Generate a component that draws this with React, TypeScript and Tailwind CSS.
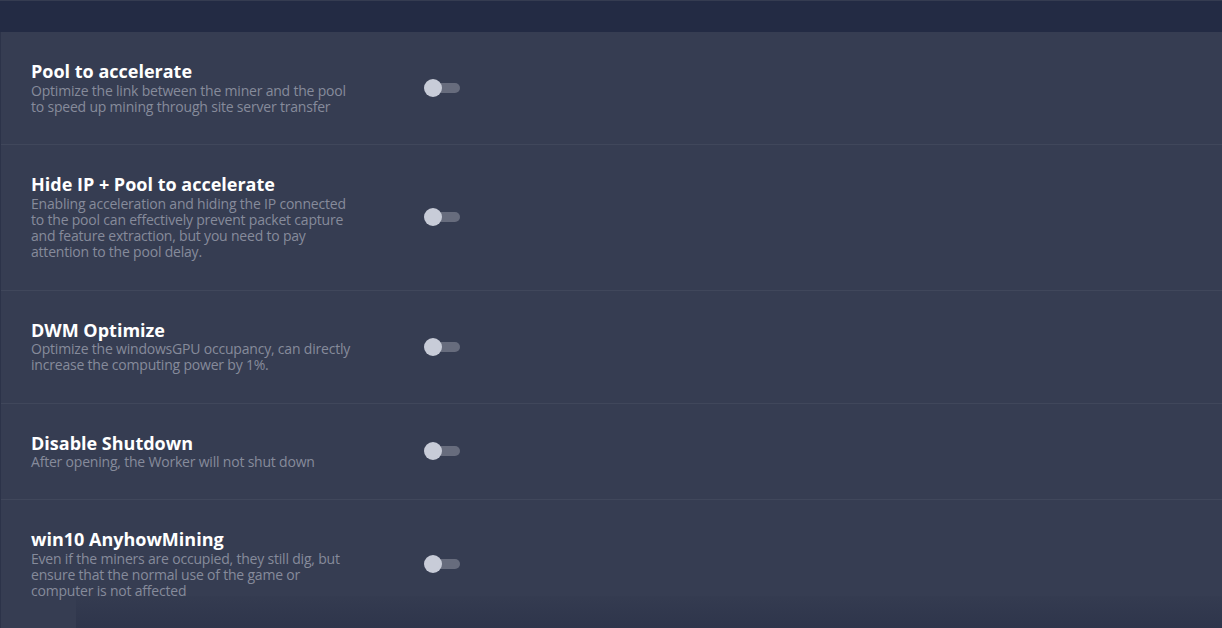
import { useState } from 'react';

const options = [
  {
    id: 'pool',
    title: 'Pool to accelerate',
    lines: ['Optimize the link between the miner and the pool', 'to speed up mining through site server transfer'],
  },
  {
    id: 'hideip',
    title: 'Hide IP + Pool to accelerate',
    lines: [
      'Enabling acceleration and hiding the IP connected',
      'to the pool can effectively prevent packet capture',
      'and feature extraction, but you need to pay',
      'attention to the pool delay.',
    ],
  },
  {
    id: 'dwm',
    title: 'DWM Optimize',
    lines: ['Optimize the windowsGPU occupancy, can directly', 'increase the computing power by 1%.'],
  },
  {
    id: 'shutdown',
    title: 'Disable Shutdown',
    lines: ['After opening, the Worker will not shut down'],
  },
  {
    id: 'anyhow',
    title: 'win10 AnyhowMining',
    lines: [
      'Even if the miners are occupied, they still dig, but',
      'ensure that the normal use of the game or',
      'computer is not affected',
    ],
  },
];

const Toggle = ({ on, onClick }: { on: boolean; onClick: () => void }) => (
  <button onClick={onClick} className="relative w-[36px] h-[18px] flex items-center">
    <span className="absolute left-[8px] right-0 h-[10px] rounded-full bg-[#676c7d]" />
    <span
      className={`absolute top-0 w-[18px] h-[18px] rounded-full bg-[#c8ccd8] ${on ? 'left-[18px]' : 'left-0'}`}
    />
  </button>
);

export default function App() {
  const [enabled, setEnabled] = useState<Record<string, boolean>>({});

  return (
    <div
      className="w-[1222px] h-[628px] overflow-hidden flex flex-col bg-[#232b44]"
      style={{ fontFamily: '"Open Sans", "Noto Sans", sans-serif' }}
    >
      {/* top bar */}
      <div className="h-[32px] shrink-0 border-t border-[#353c51] bg-[#232b44]" />

      {/* settings panel */}
      <div className="relative flex-1 overflow-hidden bg-[#363d52] border-l border-[#2c3349]">
        {options.map((opt, i) => (
          <div
            key={opt.id}
            className={`flex items-center pl-[30px] py-[29px] ${i < options.length - 1 ? 'border-b border-[#40475b]' : ''}`}
          >
            <div className="w-[393px]">
              <div className="text-white text-[18px] leading-[21.5px] font-bold">{opt.title}</div>
              <div className="text-[#868b9b] text-[14px] leading-[16.25px] tracking-[-0.2px]">
                {opt.lines.map(l => (
                  <div key={l}>{l}</div>
                ))}
              </div>
            </div>
            <Toggle
              on={!!enabled[opt.id]}
              onClick={() => setEnabled(s => ({ ...s, [opt.id]: !s[opt.id] }))}
            />
          </div>
        ))}

        {/* bottom fade strip */}
        <div className="absolute left-[75px] right-0 bottom-0 h-[32px] bg-gradient-to-b from-[#343b50]/80 to-[#2e354b]" />
      </div>
    </div>
  );
}
